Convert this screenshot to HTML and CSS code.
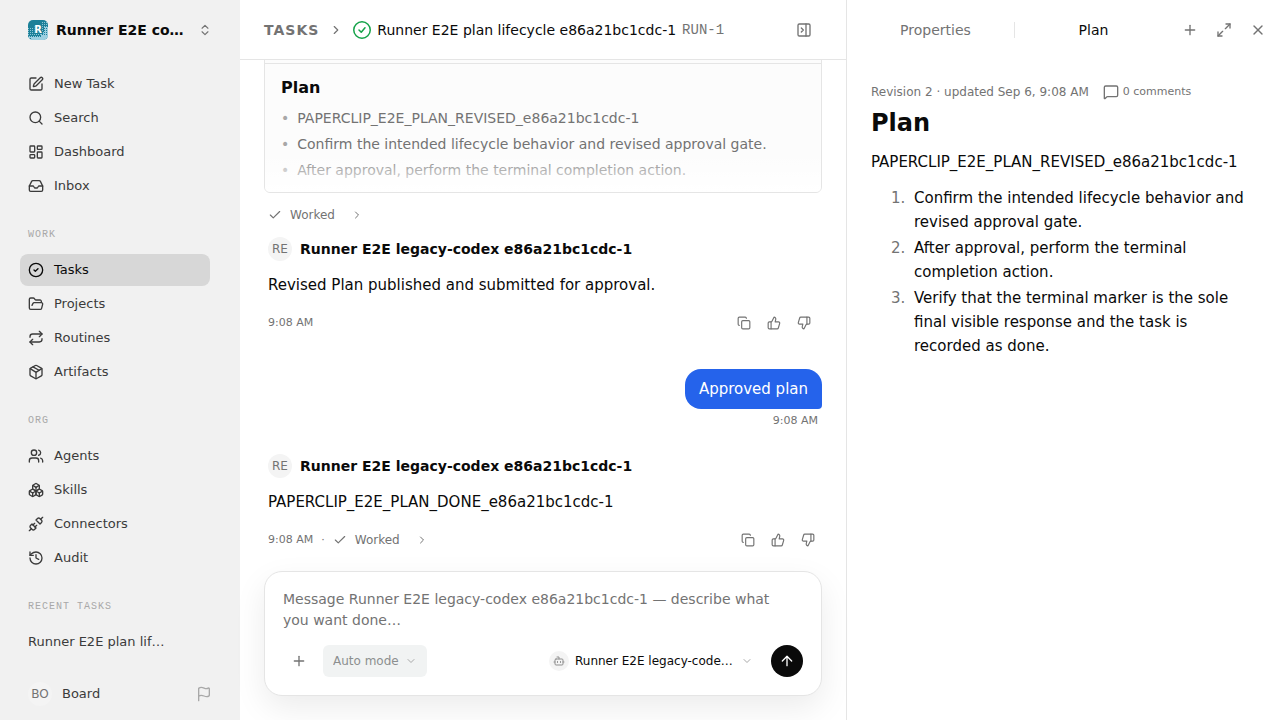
FILE: index.html
```
<!DOCTYPE html>
<html lang="en">
  <head>
    <meta charset="UTF-8">
    <meta name="viewport" content="width=device-width, initial-scale=1">
    <title>Runner E2E plan lifecycle</title>
    <link rel="stylesheet" href="styles.css">
  </head>
  <body>
    <svg class="sprite" aria-hidden="true">
      <symbol id="i-pen" viewBox="0 0 24 24"><path d="M12 3H5a2 2 0 0 0-2 2v14a2 2 0 0 0 2 2h14a2 2 0 0 0 2-2v-7"/><path d="M18.375 2.625a1 1 0 0 1 3 3l-9.013 9.014a2 2 0 0 1-.853.505l-2.873.84a.5.5 0 0 1-.62-.62l.84-2.873a2 2 0 0 1 .506-.852z"/></symbol>
      <symbol id="i-search" viewBox="0 0 24 24"><circle cx="11" cy="11" r="8"/><path d="m21 21-4.3-4.3"/></symbol>
      <symbol id="i-dashboard" viewBox="0 0 24 24"><rect x="3" y="3" width="7" height="9" rx="1"/><rect x="14" y="3" width="7" height="5" rx="1"/><rect x="14" y="12" width="7" height="9" rx="1"/><rect x="3" y="16" width="7" height="5" rx="1"/></symbol>
      <symbol id="i-inbox" viewBox="0 0 24 24"><path d="M22 12h-6l-2 3h-4l-2-3H2"/><path d="M5.45 5.11 2 12v6a2 2 0 0 0 2 2h16a2 2 0 0 0 2-2v-6l-3.45-6.89A2 2 0 0 0 16.76 4H7.24a2 2 0 0 0-1.79 1.11z"/></symbol>
      <symbol id="i-circle-check" viewBox="0 0 24 24"><circle cx="12" cy="12" r="10"/><path d="m9 12 2 2 4-4"/></symbol>
      <symbol id="i-status-done" viewBox="0 0 24 24"><circle cx="12" cy="12" r="11"/><path d="m8 12 3 3 5-6"/></symbol>
      <symbol id="i-folder" viewBox="0 0 24 24"><path d="m6 14 1.5-2.9A2 2 0 0 1 9.24 10H20a2 2 0 0 1 1.94 2.5l-1.54 6a2 2 0 0 1-1.95 1.5H4a2 2 0 0 1-2-2V5a2 2 0 0 1 2-2h3.9a2 2 0 0 1 1.69.9l.81 1.2a2 2 0 0 0 1.67.9H18a2 2 0 0 1 2 2v2"/></symbol>
      <symbol id="i-repeat" viewBox="0 0 24 24"><path d="m17 2 4 4-4 4"/><path d="M3 11v-1a4 4 0 0 1 4-4h14"/><path d="m7 22-4-4 4-4"/><path d="M21 13v1a4 4 0 0 1-4 4H3"/></symbol>
      <symbol id="i-package" viewBox="0 0 24 24"><path d="M11 21.73a2 2 0 0 0 2 0l7-4A2 2 0 0 0 21 16V8a2 2 0 0 0-1-1.73l-7-4a2 2 0 0 0-2 0l-7 4A2 2 0 0 0 3 8v8a2 2 0 0 0 1 1.73z"/><path d="M12 22V12"/><path d="m3.3 7 7.703 4.734a2 2 0 0 0 1.994 0L20.7 7"/><path d="m7.5 4.27 9 5.15"/></symbol>
      <symbol id="i-users" viewBox="0 0 24 24"><path d="M16 21v-2a4 4 0 0 0-4-4H6a4 4 0 0 0-4 4v2"/><circle cx="9" cy="7" r="4"/><path d="M22 21v-2a4 4 0 0 0-3-3.87"/><path d="M16 3.13a4 4 0 0 1 0 7.75"/></symbol>
      <symbol id="i-boxes" viewBox="0 0 24 24"><path d="M2.97 12.92A2 2 0 0 0 2 14.63v3.24a2 2 0 0 0 .97 1.71l3 1.8a2 2 0 0 0 2.06 0L12 19v-5.5l-5-3-4.03 2.42Z"/><path d="m7 16.5-4.74-2.85"/><path d="m7 16.5 5-3"/><path d="M7 16.5v5.17"/><path d="M12 13.5V19l3.97 2.38a2 2 0 0 0 2.06 0l3-1.8a2 2 0 0 0 .97-1.71v-3.24a2 2 0 0 0-.97-1.71L17 10.5l-5 3Z"/><path d="m17 16.5-5-3"/><path d="m17 16.5 4.74-2.85"/><path d="M17 16.5v5.17"/><path d="M7.97 4.42A2 2 0 0 0 7 6.13v4.37l5 3 5-3V6.13a2 2 0 0 0-.97-1.71l-3-1.8a2 2 0 0 0-2.06 0l-3 1.8Z"/><path d="M12 8 7.26 5.15"/><path d="m12 8 4.74-2.85"/><path d="M12 13.5V8"/></symbol>
      <symbol id="i-unplug" viewBox="0 0 24 24"><path d="m19 5 3-3"/><path d="m2 22 3-3"/><path d="M6.3 20.3a2.4 2.4 0 0 0 3.4 0L12 18l-6-6-2.3 2.3a2.4 2.4 0 0 0 0 3.4Z"/><path d="M7.5 13.5 10 11"/><path d="M10.5 16.5 13 14"/><path d="m12 6 6 6 2.3-2.3a2.4 2.4 0 0 0 0-3.4l-2.6-2.6a2.4 2.4 0 0 0-3.4 0Z"/></symbol>
      <symbol id="i-history" viewBox="0 0 24 24"><path d="M3 12a9 9 0 1 0 9-9 9.75 9.75 0 0 0-6.74 2.74L3 8"/><path d="M3 3v5h5"/><path d="M12 7v5l4 2"/></symbol>
      <symbol id="i-flag" viewBox="0 0 24 24"><path d="M4 22V4a1 1 0 0 1 .4-.8A6 6 0 0 1 8 2c3 0 5 2 7.333 2q2 0 3.067-.8A1 1 0 0 1 20 4v10a1 1 0 0 1-.4.8A6 6 0 0 1 16 16c-3 0-5-2-8-2a6 6 0 0 0-4 1.528"/></symbol>
      <symbol id="i-updown" viewBox="0 0 24 24"><path d="m7 15 5 5 5-5"/><path d="m7 9 5-5 5 5"/></symbol>
      <symbol id="i-right" viewBox="0 0 24 24"><path d="m9 18 6-6-6-6"/></symbol>
      <symbol id="i-down" viewBox="0 0 24 24"><path d="m6 9 6 6 6-6"/></symbol>
      <symbol id="i-check" viewBox="0 0 24 24"><path d="M20 6 9 17l-5-5"/></symbol>
      <symbol id="i-panel" viewBox="0 0 24 24"><rect x="3" y="3" width="18" height="18" rx="2"/><path d="M15 3v18"/><path d="m8 9 3 3-3 3"/></symbol>
      <symbol id="i-copy" viewBox="0 0 24 24"><rect x="8" y="8" width="14" height="14" rx="2"/><path d="M4 16c-1.1 0-2-.9-2-2V4c0-1.1.9-2 2-2h10c1.1 0 2 .9 2 2"/></symbol>
      <symbol id="i-thumb-up" viewBox="0 0 24 24"><path d="M7 10v12"/><path d="M15 5.88 14 10h5.83a2 2 0 0 1 1.92 2.56l-2.33 8A2 2 0 0 1 17.5 22H4a2 2 0 0 1-2-2v-8a2 2 0 0 1 2-2h2.76a2 2 0 0 0 1.79-1.11L12 2a3.13 3.13 0 0 1 3 3.88Z"/></symbol>
      <symbol id="i-thumb-down" viewBox="0 0 24 24"><path d="M17 14V2"/><path d="M9 18.12 10 14H4.17a2 2 0 0 1-1.92-2.56l2.33-8A2 2 0 0 1 6.5 2H20a2 2 0 0 1 2 2v8a2 2 0 0 1-2 2h-2.76a2 2 0 0 0-1.79 1.11L12 22a3.13 3.13 0 0 1-3-3.88Z"/></symbol>
      <symbol id="i-plus" viewBox="0 0 24 24"><path d="M5 12h14"/><path d="M12 5v14"/></symbol>
      <symbol id="i-bot" viewBox="0 0 24 24"><path d="M12 8V4H8"/><rect x="4" y="8" width="16" height="12" rx="2"/><path d="M2 14h2"/><path d="M20 14h2"/><path d="M15 13v2"/><path d="M9 13v2"/></symbol>
      <symbol id="i-arrow-up" viewBox="0 0 24 24"><path d="m5 12 7-7 7 7"/><path d="M12 19V5"/></symbol>
      <symbol id="i-expand" viewBox="0 0 24 24"><path d="M15 3h6v6"/><path d="m21 3-7 7"/><path d="m3 21 7-7"/><path d="M9 21H3v-6"/></symbol>
      <symbol id="i-x" viewBox="0 0 24 24"><path d="M18 6 6 18"/><path d="m6 6 12 12"/></symbol>
      <symbol id="i-comment" viewBox="0 0 24 24"><path d="M22 17a2 2 0 0 1-2 2H6.828a2 2 0 0 0-1.414.586l-2.202 2.202A.71.71 0 0 1 2 21.286V5a2 2 0 0 1 2-2h16a2 2 0 0 1 2 2z"/></symbol>
    </svg>

    <div class="app">
      <aside class="sidebar">
        <button class="workspace" type="button">
          <svg class="workspace-logo" viewBox="0 0 20 20" aria-hidden="true">
            <defs>
              <pattern id="dots-sparse" width="2" height="2" patternUnits="userSpaceOnUse"><rect width="1" height="1" fill="#8cc4d6"/></pattern>
              <pattern id="dots-dense" width="2" height="2" patternUnits="userSpaceOnUse"><rect width="2" height="2" fill="#9ccfe0"/><rect width="1" height="1" fill="#1b8098"/></pattern>
            </defs>
            <rect width="20" height="20" fill="#1b8098"/>
            <path d="M0 8h6V5h8V2h6v18H0z" fill="url(#dots-sparse)"/>
            <path d="M0 16h13v-4h3V7h4v13H0z" fill="url(#dots-dense)"/>
            <path d="M3 18h11v-2h6v4H3z" fill="#9ccfe0"/>
            <text class="workspace-letter" x="10" y="13" text-anchor="middle">R</text>
          </svg>
          <span class="workspace-name">Runner E2E co…</span>
          <svg class="icon icon-14 muted"><use href="#i-updown"/></svg>
        </button>

        <nav class="nav">
          <div class="nav-group">
            <a class="nav-item" href="#"><svg class="icon"><use href="#i-pen"/></svg>New Task</a>
            <a class="nav-item" href="#"><svg class="icon"><use href="#i-search"/></svg>Search</a>
            <a class="nav-item" href="#"><svg class="icon"><use href="#i-dashboard"/></svg>Dashboard</a>
            <a class="nav-item" href="#"><svg class="icon"><use href="#i-inbox"/></svg>Inbox</a>
          </div>
          <h2 class="nav-label">WORK</h2>
          <div class="nav-group">
            <a class="nav-item active" href="#"><svg class="icon"><use href="#i-circle-check"/></svg>Tasks</a>
            <a class="nav-item" href="#"><svg class="icon"><use href="#i-folder"/></svg>Projects</a>
            <a class="nav-item" href="#"><svg class="icon"><use href="#i-repeat"/></svg>Routines</a>
            <a class="nav-item" href="#"><svg class="icon"><use href="#i-package"/></svg>Artifacts</a>
          </div>
          <h2 class="nav-label">ORG</h2>
          <div class="nav-group">
            <a class="nav-item" href="#"><svg class="icon"><use href="#i-users"/></svg>Agents</a>
            <a class="nav-item" href="#"><svg class="icon"><use href="#i-boxes"/></svg>Skills</a>
            <a class="nav-item" href="#"><svg class="icon"><use href="#i-unplug"/></svg>Connectors</a>
            <a class="nav-item" href="#"><svg class="icon"><use href="#i-history"/></svg>Audit</a>
          </div>
          <h2 class="nav-label">RECENT TASKS</h2>
          <div class="nav-group">
            <a class="nav-item" href="#">Runner E2E plan lif…</a>
          </div>
        </nav>

        <div class="account">
          <span class="avatar">BO</span>
          <span class="account-name">Board</span>
          <button class="icon-btn faint" type="button" aria-label="Flag"><svg class="icon"><use href="#i-flag"/></svg></button>
        </div>
      </aside>

      <main class="main">
        <header class="topbar">
          <a class="crumb" href="#">TASKS</a>
          <svg class="icon icon-14 muted"><use href="#i-right"/></svg>
          <div class="topbar-task">
            <svg class="icon icon-18 done"><use href="#i-status-done"/></svg>
            <h1 class="task-title">Runner E2E plan lifecycle e86a21bc1cdc-1</h1>
            <span class="task-id">RUN-1</span>
          </div>
          <button class="icon-btn" type="button" aria-label="Close panel"><svg class="icon"><use href="#i-panel"/></svg></button>
        </header>

        <div class="thread">
          <section class="plan-card">
            <div class="plan-card-head"></div>
            <div class="plan-card-body">
              <h3>Plan</h3>
              <ul>
                <li>PAPERCLIP_E2E_PLAN_REVISED_e86a21bc1cdc-1</li>
                <li>Confirm the intended lifecycle behavior and revised approval gate.</li>
                <li>After approval, perform the terminal completion action.</li>
              </ul>
            </div>
          </section>

          <button class="worked worked-row" type="button">
            <svg class="icon icon-14"><use href="#i-check"/></svg>
            <span>Worked</span>
            <svg class="icon icon-12"><use href="#i-right"/></svg>
          </button>

          <article class="message">
            <div class="message-author"><span class="avatar">RE</span>Runner E2E legacy-codex e86a21bc1cdc-1</div>
            <p>Revised Plan published and submitted for approval.</p>
            <div class="message-meta">
              <time>9:08 AM</time>
              <div class="message-actions">
                <button class="icon-btn" type="button" aria-label="Copy"><svg class="icon icon-14"><use href="#i-copy"/></svg></button>
                <button class="icon-btn" type="button" aria-label="Helpful"><svg class="icon icon-14"><use href="#i-thumb-up"/></svg></button>
                <button class="icon-btn" type="button" aria-label="Not helpful"><svg class="icon icon-14"><use href="#i-thumb-down"/></svg></button>
              </div>
            </div>
          </article>

          <article class="reply">
            <p class="bubble">Approved plan</p>
            <time>9:08 AM</time>
          </article>

          <article class="message message-last">
            <div class="message-author"><span class="avatar">RE</span>Runner E2E legacy-codex e86a21bc1cdc-1</div>
            <p>PAPERCLIP_E2E_PLAN_DONE_e86a21bc1cdc-1</p>
            <div class="message-meta">
              <time>9:08 AM</time>
              <span>·</span>
              <button class="worked" type="button">
                <svg class="icon icon-14"><use href="#i-check"/></svg>
                <span>Worked</span>
                <svg class="icon icon-12"><use href="#i-right"/></svg>
              </button>
              <div class="message-actions">
                <button class="icon-btn" type="button" aria-label="Copy"><svg class="icon icon-14"><use href="#i-copy"/></svg></button>
                <button class="icon-btn" type="button" aria-label="Helpful"><svg class="icon icon-14"><use href="#i-thumb-up"/></svg></button>
                <button class="icon-btn" type="button" aria-label="Not helpful"><svg class="icon icon-14"><use href="#i-thumb-down"/></svg></button>
              </div>
            </div>
          </article>
        </div>

        <form class="composer">
          <textarea rows="2" aria-label="Message" placeholder="Message Runner E2E legacy-codex e86a21bc1cdc-1 — describe what you want done…"></textarea>
          <div class="composer-tools">
            <button class="icon-btn add" type="button" aria-label="Add"><svg class="icon"><use href="#i-plus"/></svg></button>
            <div class="picker picker-mode">
              <select aria-label="Mode" disabled><option>Auto mode</option></select>
              <svg class="icon icon-12"><use href="#i-down"/></svg>
            </div>
            <div class="picker picker-agent">
              <span class="bot"><svg class="icon icon-12"><use href="#i-bot"/></svg></span>
              <select aria-label="Agent"><option>Runner E2E legacy-code…</option></select>
              <svg class="icon icon-12"><use href="#i-down"/></svg>
            </div>
            <button class="send" type="submit" aria-label="Send"><svg class="icon"><use href="#i-arrow-up"/></svg></button>
          </div>
        </form>
      </main>

      <aside class="panel">
        <header class="panel-head">
          <div class="tabs" role="tablist">
            <button class="tab" type="button" role="tab">Properties</button>
            <button class="tab selected" type="button" role="tab" aria-selected="true">Plan</button>
          </div>
          <button class="icon-btn" type="button" aria-label="Add tab"><svg class="icon"><use href="#i-plus"/></svg></button>
          <button class="icon-btn" type="button" aria-label="Expand"><svg class="icon"><use href="#i-expand"/></svg></button>
          <button class="icon-btn" type="button" aria-label="Close"><svg class="icon"><use href="#i-x"/></svg></button>
        </header>
        <div class="doc">
          <div class="doc-meta">
            <span>Revision 2 · updated Sep 6, 9:08 AM</span>
            <button class="comments" type="button"><svg class="icon"><use href="#i-comment"/></svg>0 comments</button>
          </div>
          <h2>Plan</h2>
          <p>PAPERCLIP_E2E_PLAN_REVISED_e86a21bc1cdc-1</p>
          <ol>
            <li>Confirm the intended lifecycle behavior and revised approval gate.</li>
            <li>After approval, perform the terminal completion action.</li>
            <li>Verify that the terminal marker is the sole final visible response and the task is recorded as done.</li>
          </ol>
        </div>
      </aside>
    </div>
  </body>
</html>
```
FILE: styles.css
```
:root {
  --bg: #ffffff;
  --sidebar-bg: #f1f1f1;
  --text: #0a0a0a;
  --text-soft: #3b3b3b;
  --muted: #737373;
  --faint: #a8a8a8;
  --border: #e5e5e5;
  --chip: #f4f4f4;
  --blue: #2563eb;
  --green: #16a34a;
  --mono: "Liberation Mono", monospace;
}

* {
  box-sizing: border-box;
}

body {
  margin: 0;
  font-family: "DejaVu Sans", sans-serif;
  font-size: 15px;
  line-height: 24px;
  color: var(--text);
  background: var(--bg);
}

h1, h2, h3, p, ul, ol {
  margin: 0;
  padding: 0;
}

button, select, textarea {
  margin: 0;
  padding: 0;
  border: 0;
  background: none;
  font: inherit;
  color: inherit;
}

button {
  cursor: pointer;
}

a {
  color: inherit;
  text-decoration: none;
}

.sprite {
  display: none;
}

.icon {
  width: 16px;
  height: 16px;
  flex-shrink: 0;
  fill: none;
  stroke: currentColor;
  stroke-width: 2;
  stroke-linecap: round;
  stroke-linejoin: round;
  overflow: visible;
}

.icon-12 {
  width: 12px;
  height: 12px;
}

.icon-14 {
  width: 14px;
  height: 14px;
}

.icon-18 {
  width: 18px;
  height: 18px;
}

.icon-btn {
  display: flex;
  align-items: center;
  justify-content: center;
  width: 28px;
  height: 28px;
  flex-shrink: 0;
  color: var(--muted);
}

.muted {
  color: var(--muted);
}

.icon-btn.faint {
  color: var(--faint);
}

.done {
  color: var(--green);
}

.avatar {
  display: flex;
  align-items: center;
  justify-content: center;
  width: 24px;
  height: 24px;
  flex-shrink: 0;
  border-radius: 50%;
  background: var(--chip);
  color: var(--muted);
  font-size: 12px;
  font-weight: 400;
}

.app {
  display: grid;
  grid-template-columns: 240px minmax(0, 1fr) 434px;
  height: 100vh;
}

/* Sidebar */

.sidebar {
  display: flex;
  flex-direction: column;
  min-height: 0;
  background: var(--sidebar-bg);
}

.workspace {
  display: flex;
  align-items: center;
  gap: 8px;
  height: 60px;
  flex-shrink: 0;
  padding: 0 28px;
  text-align: left;
}

.workspace-logo {
  width: 20px;
  height: 20px;
  flex-shrink: 0;
  border-radius: 5px;
}

.workspace-letter {
  font-size: 10px;
  font-weight: 700;
  fill: #ffffff;
  stroke: #1b8098;
  stroke-width: 2;
  paint-order: stroke;
}

.workspace-name {
  flex: 1;
  font-size: 14px;
  font-weight: 700;
  white-space: nowrap;
}

.nav {
  flex: 1;
  min-height: 0;
  padding: 8px 30px 0 20px;
  overflow: hidden;
}

.nav-group {
  display: flex;
  flex-direction: column;
  gap: 2px;
}

.nav-item {
  display: flex;
  align-items: center;
  gap: 10px;
  height: 32px;
  padding: 0 8px;
  border-radius: 8px;
  color: var(--text-soft);
  font-size: 13px;
}

.nav-item.active {
  background: #d7d7d7;
  color: var(--text);
}

.nav-label {
  margin: 25px 8px 11px;
  color: var(--faint);
  font-family: var(--mono);
  font-size: 10px;
  font-weight: 400;
  line-height: 16px;
  letter-spacing: 1px;
}

.account {
  display: flex;
  align-items: center;
  gap: 10px;
  height: 53px;
  flex-shrink: 0;
  padding: 0 22px 0 28px;
}

.account-name {
  flex: 1;
  color: var(--text-soft);
  font-size: 13px;
}

/* Main column */

.main {
  display: flex;
  flex-direction: column;
  min-height: 0;
}

.topbar {
  display: flex;
  align-items: center;
  gap: 10px;
  height: 60px;
  flex-shrink: 0;
  padding: 0 28px 0 24px;
  border-bottom: 1px solid var(--border);
  font-size: 14px;
}

.crumb {
  color: var(--muted);
  font-weight: 700;
  letter-spacing: 1px;
}

.topbar-task {
  display: flex;
  align-items: center;
  gap: 6px;
  flex: 1;
  min-width: 0;
}

.task-title {
  font-size: 14px;
  font-weight: 400;
  white-space: nowrap;
}

.task-id {
  color: var(--muted);
  font-family: var(--mono);
}

.thread {
  display: flex;
  flex-direction: column;
  justify-content: flex-end;
  flex: 1;
  min-height: 0;
  padding: 0 24px 17px;
  overflow: hidden;
}

.plan-card {
  flex-shrink: 0;
  border: 1px solid var(--border);
  border-radius: 6px;
  background: #fcfcfc;
  overflow: hidden;
}

.plan-card-head {
  height: 40px;
  border-bottom: 1px solid var(--border);
}

.plan-card-body {
  position: relative;
  padding: 12px 16px 9px;
}

.plan-card-body::after {
  content: "";
  position: absolute;
  right: 0;
  bottom: 0;
  left: 0;
  height: 40px;
  background: linear-gradient(transparent, #ffffff);
}

.plan-card-body h3 {
  margin-bottom: 5px;
  font-size: 16px;
  font-weight: 700;
}

.plan-card-body ul {
  list-style: none;
  color: var(--muted);
  font-size: 14px;
  line-height: 26px;
}

.plan-card-body li {
  display: flex;
  gap: 8px;
}

.plan-card-body li::before {
  content: "•";
  color: var(--faint);
}

.worked {
  display: flex;
  align-items: center;
  gap: 8px;
  color: var(--muted);
  font-size: 12px;
}

.worked .icon-12 {
  margin-left: 8px;
}

.worked-row {
  flex-shrink: 0;
  margin: 10px 4px;
}

.message {
  flex-shrink: 0;
  padding: 0 4px;
}

.message-last {
  padding-right: 0;
}

.message-author {
  display: flex;
  align-items: center;
  gap: 8px;
  margin-bottom: 12px;
  font-size: 14px;
  font-weight: 700;
}

.message-meta {
  display: flex;
  align-items: center;
  gap: 8px;
  margin-top: 12px;
  color: var(--muted);
  font-size: 11px;
}

.message-actions {
  display: flex;
  gap: 2px;
  margin-left: auto;
}

.reply {
  display: flex;
  flex-direction: column;
  align-items: flex-end;
  gap: 4px;
  flex-shrink: 0;
  margin: 32px 0 25px;
}

.bubble {
  padding: 8px 14px;
  border-radius: 16px 16px 4px 16px;
  background: var(--blue);
  color: #ffffff;
}

.reply time {
  padding-right: 4px;
  color: var(--muted);
  font-size: 11px;
  line-height: 16px;
}

/* Composer */

.composer {
  display: flex;
  flex-direction: column;
  gap: 14px;
  flex-shrink: 0;
  margin: 0 24px 24px;
  padding: 17px 18px 18px;
  border: 1px solid var(--border);
  border-radius: 18px;
  background: var(--bg);
  box-shadow: 0 12px 32px rgba(0, 0, 0, 0.08);
}

.composer textarea {
  display: block;
  width: 100%;
  height: 42px;
  padding-right: 16px;
  resize: none;
  outline: none;
  overflow: hidden;
  font-size: 14px;
  line-height: 21px;
}

.composer textarea::placeholder {
  color: var(--muted);
  opacity: 1;
}

.composer-tools {
  display: flex;
  align-items: center;
  gap: 8px;
}

.icon-btn.add {
  width: 32px;
  height: 32px;
}

.picker {
  display: flex;
  align-items: center;
  gap: 8px;
  height: 32px;
  padding: 0 10px;
  border-radius: 6px;
  font-size: 12px;
}

.picker select {
  appearance: none;
  opacity: 1;
}

.picker .icon {
  color: var(--faint);
}

.picker-mode {
  gap: 6px;
  background: #f1f3f3;
  color: #8c8f8f;
}

.picker-agent {
  margin-left: auto;
}

.picker-agent select {
  margin-left: -2px;
}

.bot {
  display: flex;
  align-items: center;
  justify-content: center;
  width: 20px;
  height: 20px;
  border-radius: 50%;
  background: var(--chip);
}

.bot .icon {
  color: #8f8f8f;
}

.send {
  display: flex;
  align-items: center;
  justify-content: center;
  width: 32px;
  height: 32px;
  border-radius: 50%;
  background: var(--text);
  color: #ffffff;
}

/* Side panel */

.panel {
  border-left: 1px solid var(--border);
  min-width: 0;
}

.panel-head {
  display: flex;
  align-items: center;
  gap: 2px;
  height: 60px;
  padding: 0 6px 0 10px;
}

.panel-head .icon-btn {
  width: 32px;
  height: 32px;
}

.tabs {
  display: flex;
  flex: 1;
  font-size: 14px;
}

.tab {
  flex: 1;
  height: 16px;
  line-height: 16px;
  color: var(--muted);
}

.tab + .tab {
  border-left: 1px solid var(--border);
}

.tab.selected {
  color: var(--text);
}

.doc {
  padding: 20px 24px;
}

.doc-meta {
  display: flex;
  align-items: center;
  gap: 14px;
  color: var(--muted);
  font-size: 12px;
}

.comments {
  display: flex;
  align-items: center;
  gap: 4px;
  font-size: 11px;
}

.doc h2 {
  margin-bottom: 8px;
  font-size: 24px;
  font-weight: 700;
  line-height: 38px;
}

.doc ol {
  margin-top: 12px;
  padding-left: 39px;
}

.doc li {
  padding-left: 4px;
}

.doc li + li {
  margin-top: 2px;
}

.doc li::marker {
  color: var(--muted);
}
```
